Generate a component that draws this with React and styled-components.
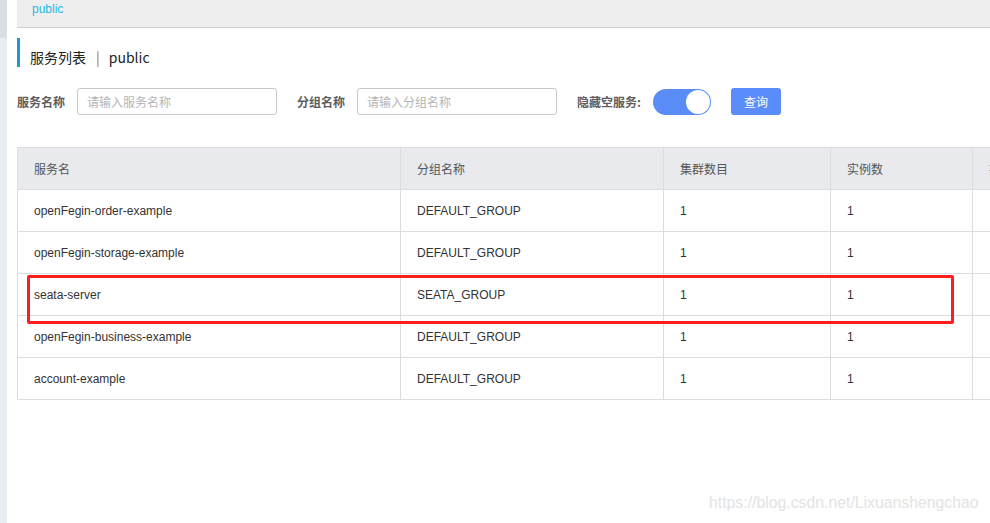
import React from "react";
import styled, { createGlobalStyle } from "styled-components";

const Global = createGlobalStyle`
  html, body { margin: 0; padding: 0; background: #fff; overflow: hidden; }
  body { font-family: "Liberation Sans", "Noto Sans CJK SC", sans-serif; }
  * { box-sizing: border-box; }
`;

const Page = styled.div`
  position: relative;
  display: flex;
  width: 990px;
  height: 523px;
  overflow: hidden;
`;

const Sidebar = styled.div`
  width: 7px;
  flex: none;
  display: flex;
  flex-direction: column;
  background: #e9ecf0;
`;

const SidebarTop = styled.div`
  height: 38px;
  background: #dadee4;
`;

const Main = styled.div`
  flex: 1;
  margin-left: 10px;
  min-width: 0;
  display: flex;
  flex-direction: column;
`;

const TopBand = styled.div`
  height: 28px;
  background: #eeeeee;
  border-bottom: 1px solid #cfcfcf;
  padding: 1px 0 0 15px;
  font-size: 12px;
  line-height: 17px;
  color: #27b9e3;
`;

const Title = styled.div`
  margin-top: 10px;
  height: 29px;
  border-left: 3px solid #1a9bd0;
  padding: 9px 0 0 10px;
  font-family: "Noto Sans CJK SC", sans-serif;
  font-size: 14px;
  line-height: 18px;
  color: #222;
  display: flex;
  align-items: center;
`;

const Sep = styled.span`
  color: #b36b12;
  margin: 0 9px 0 10px;
`;

const SearchRow = styled.div`
  margin-top: 21px;
  display: flex;
  align-items: center;
  height: 27px;
`;

const Label = styled.span`
  font-family: "Noto Sans CJK SC", sans-serif;
  font-size: 12px;
  font-weight: bold;
  color: #5d5d5d;
  margin-right: ${(p) => p.$gap}px;
`;

const Input = styled.input`
  width: 200px;
  height: 27px;
  border: 1px solid #c8c8cc;
  border-radius: 3px;
  padding: 0 9px;
  font-family: "Noto Sans CJK SC", sans-serif;
  font-size: 12px;
  margin-right: 20px;
  outline: none;
  &::placeholder { color: #b5b5b5; }
`;

const Toggle = styled.div`
  width: 58px;
  height: 26px;
  border-radius: 13px;
  background: #5a8cf8;
  display: flex;
  justify-content: flex-end;
  align-items: center;
  padding-right: 1px;
  margin-right: 20px;
`;

const Knob = styled.div`
  width: 24px;
  height: 24px;
  border-radius: 50%;
  background: #fff;
`;

const Button = styled.button`
  width: 50px;
  height: 27px;
  border: none;
  border-radius: 3px;
  background: #5a8cfb;
  color: #fff;
  font-family: "Noto Sans CJK SC", sans-serif;
  font-size: 12px;
  padding: 0;
`;

const Table = styled.div`
  margin-top: 32px;
  width: 1100px;
  border-top: 1px solid #dcdde1;
  border-left: 1px solid #dcdde1;
`;

const Row = styled.div`
  display: grid;
  grid-template-columns: 383px 263px 167px 142px 145px;
  height: 42px;
  background: ${(p) => (p.$head ? "#e9eaee" : "#fff")};
`;

const Cell = styled.div`
  border-right: 1px solid #dcdde1;
  border-bottom: 1px solid #dcdde1;
  padding-left: 16px;
  display: flex;
  align-items: center;
  font-family: ${(p) => (p.$head ? '"Noto Sans CJK SC", sans-serif' : '"Liberation Sans", "Noto Sans CJK SC", sans-serif')};
  font-size: 12px;
  color: ${(p) => (p.$head ? "#555" : "#333")};
  white-space: nowrap;
`;

const Highlight = styled.div`
  position: absolute;
  left: 27px;
  top: 275px;
  width: 927px;
  height: 49px;
  border: 3px solid #ff1d1d;
  border-radius: 2px;
  pointer-events: none;
`;

const Watermark = styled.div`
  position: absolute;
  left: 709px;
  top: 494px;
  font-family: "Liberation Sans", sans-serif;
  font-size: 15.8px;
  color: #e3e3e3;
  white-space: nowrap;
`;

const rows = [
  ["openFegin-order-example", "DEFAULT_GROUP", "1", "1"],
  ["openFegin-storage-example", "DEFAULT_GROUP", "1", "1"],
  ["seata-server", "SEATA_GROUP", "1", "1"],
  ["openFegin-business-example", "DEFAULT_GROUP", "1", "1"],
  ["account-example", "DEFAULT_GROUP", "1", "1"],
];

export default function App() {
  return (
    <>
      <Global />
      <Page>
        <Sidebar>
          <SidebarTop />
        </Sidebar>
        <Main>
          <TopBand>public</TopBand>
          <Title>
            服务列表<Sep>|</Sep>public
          </Title>
          <SearchRow>
            <Label $gap={12}>服务名称</Label>
            <Input placeholder="请输入服务名称" />
            <Label $gap={12}>分组名称</Label>
            <Input placeholder="请输入分组名称" />
            <Label $gap={12}>隐藏空服务:</Label>
            <Toggle>
              <Knob />
            </Toggle>
            <Button>查询</Button>
          </SearchRow>
          <Table>
            <Row $head>
              <Cell $head>服务名</Cell>
              <Cell $head>分组名称</Cell>
              <Cell $head>集群数目</Cell>
              <Cell $head>实例数</Cell>
              <Cell $head>操作</Cell>
            </Row>
            {rows.map((r, i) => (
              <Row key={i}>
                {r.map((c, j) => (
                  <Cell key={j}>{c}</Cell>
                ))}
                <Cell />
              </Row>
            ))}
          </Table>
        </Main>
        <Highlight />
        <Watermark>https://blog.csdn.net/Lixuanshengchao</Watermark>
      </Page>
    </>
  );
}
